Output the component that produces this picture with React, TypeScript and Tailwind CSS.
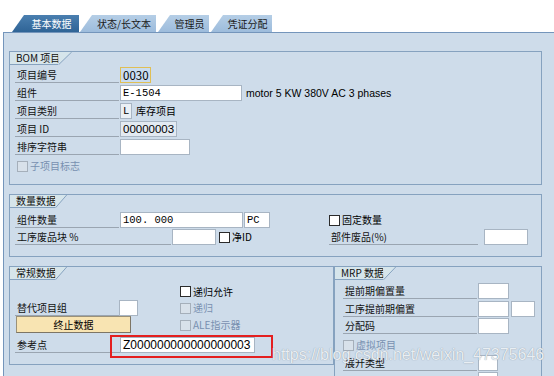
import React from "react";

function Label({ className = "", children }: { className?: string; children?: React.ReactNode }) {
  return (
    <div className={`h-4 shrink-0 border-b border-[#9aa5b1] pl-[2px] text-[10px] leading-[15px] text-[#111] whitespace-nowrap ${className}`}>
      {children}
    </div>
  );
}

function Field({ className = "", children }: { className?: string; children?: React.ReactNode }) {
  return (
    <div className={`h-4 shrink-0 overflow-hidden whitespace-nowrap border border-[#a8b5c3] px-[2px] leading-[14px] text-black ${className}`}>
      {children}
    </div>
  );
}

function Check({ label, disabled = false, className = "" }: { label: string; disabled?: boolean; className?: string }) {
  return (
    <div className={`flex h-4 items-center ${className}`}>
      <div
        className={
          disabled
            ? "h-[11px] w-[11px] border border-[#a5afba] bg-[#d8e1ea]"
            : "h-[11px] w-[11px] border border-[#2b2b2b] bg-white"
        }
      />
      <span className={disabled ? "ml-[2px] text-[10px] leading-[14px] text-[#7890b0]" : "ml-[2px] text-[10px] leading-[14px] text-black"}>
        {label}
      </span>
    </div>
  );
}

function PanelHeader({ title, boxW, slant }: { title: string; boxW: string; slant: number }) {
  return (
    <div className="flex h-[13px]">
      <div className={`${boxW} h-[13px] border-b border-[#86a2bf] bg-[#d6e5eb] pl-[6px] text-[10px] leading-[12px] text-[#111] whitespace-nowrap`}>
        {title}
      </div>
      <svg width={slant} height="13" viewBox={`0 0 ${slant} 13`} className="block">
        <polygon points={`0,0 ${slant},0 0.5,12.5`} fill="#d6e5eb" />
        <line x1={slant - 0.3} y1="0" x2="0.5" y2="12.8" stroke="#86a2bf" strokeWidth="1" />
      </svg>
    </div>
  );
}

function Tab({ label, active, className = "" }: { label: string; active?: boolean; className?: string }) {
  return (
    <div
      className={`h-[17px] shrink-0 [clip-path:polygon(12px_0,100%_0,100%_100%,0_100%)] pl-[12px] text-center text-[10px] leading-[17px] whitespace-nowrap ${
        active ? "bg-[linear-gradient(#4a7fb0,#2f6496)] text-white" : "bg-[linear-gradient(#b5cee6,#9dbcdc)] text-[#1a1a1a]"
      } ${className}`}
    >
      {label}
    </div>
  );
}

export default function App() {
  return (
    <div className="relative h-[376px] w-[554px] overflow-hidden bg-white font-['Noto_Sans_CJK_SC','Noto_Sans',sans-serif]">
      {/* tabs */}
      <div className="flex gap-px pl-[12px] pt-[15px]">
        <Tab label="基本数据" active className="w-[67px]" />
        <Tab label="状态/长文本" className="w-[76px]" />
        <Tab label="管理员" className="w-[51px] ml-px" />
        <Tab label="凭证分配" className="w-[61px] ml-px" />
      </div>

      {/* content */}
      <div className="ml-[3px] h-[400px] border-l border-t border-[#7495bb] bg-[#cedcea] pl-[5px] pt-[18px]">
        {/* BOM 项目 */}
        <div className="h-[134px] w-[533px] border border-[#86a2bf] bg-[#cedcea]">
          <PanelHeader title="BOM 项目" boxW="w-[48px]" slant={14} />
          <div className="pl-[5px] pt-[2px]">
            <div className="flex h-[18px]">
              <Label className="w-[104px]">项目编号</Label>
              <Field className="ml-px w-[31px] border-[#e0bf55] bg-[#c9dcf0] text-[11.5px]">0030</Field>
            </div>
            <div className="flex h-[18px]">
              <Label className="w-[104px]">组件</Label>
              <Field className="ml-px w-[122px] bg-white font-['Liberation_Mono',monospace] text-[10.5px]">E-1504</Field>
              <span className="ml-[4px] font-['Liberation_Sans',sans-serif] text-[10.5px] leading-[16px] text-black whitespace-nowrap">
                motor 5 KW 380V AC 3 phases
              </span>
            </div>
            <div className="flex h-[18px]">
              <Label className="w-[104px]">项目类别</Label>
              <Field className="ml-px w-[12px] bg-[#eaf0f5] px-[1px] font-['Liberation_Mono',monospace] text-[10.5px]">L</Field>
              <span className="ml-[4px] text-[10px] leading-[16px] text-black">库存项目</span>
            </div>
            <div className="flex h-[18px]">
              <Label className="w-[104px]">项目 ID</Label>
              <Field className="ml-px w-[57px] bg-[#e3eaf2] font-['Liberation_Sans',sans-serif] text-[11.5px]">00000003</Field>
            </div>
            <div className="flex h-[18px]">
              <Label className="w-[104px]">排序字符串</Label>
              <Field className="ml-px w-[70px] bg-white" />
            </div>
            <div className="flex h-[18px] items-center pl-[2px]">
              <Check label="子项目标志" disabled />
            </div>
          </div>
        </div>

        {/* 数量数据 */}
        <div className="mt-[9px] h-[63px] w-[533px] border border-[#86a2bf]">
          <PanelHeader title="数量数据" boxW="w-[45px]" slant={12} />
          <div className="pl-[5px] pt-[4px]">
            <div className="flex h-[17px]">
              <div className="flex w-[314px] shrink-0">
                <Label className="w-[104px]">组件数量</Label>
                <Field className="ml-px w-[123px] bg-white font-['Liberation_Mono',monospace] text-[10.5px]">100. 000</Field>
                <Field className="ml-px w-[26px] bg-white px-[1px] font-['Liberation_Mono',monospace] text-[10.5px]">PC</Field>
              </div>
              <Check label="固定数量" />
            </div>
            <div className="flex h-[17px]">
              <div className="flex w-[314px] shrink-0">
                <Label className="w-[156px]">工序废品块 %</Label>
                <Field className="ml-px w-[44px] bg-white" />
                <Check label="净ID" className="ml-[3px]" />
              </div>
              <Label className="w-[149px] pl-0">部件废品(%)</Label>
              <Field className="ml-[6px] w-[44px] bg-white" />
            </div>
          </div>
        </div>

        {/* bottom two panels */}
        <div className="mt-[9px] flex">
          <div className="h-[99px] w-[325px] shrink-0 border border-[#86a2bf]">
            <PanelHeader title="常规数据" boxW="w-[45px]" slant={12} />
            <div className="pl-[5px] pt-[3px]">
              <div className="flex h-[17px] items-center">
                <div className="w-[165px] shrink-0" />
                <Check label="递归允许" />
              </div>
              <div className="flex h-[16px]">
                <div className="flex w-[165px] shrink-0 items-end">
                  <Label className="w-[104px]">替代项目组</Label>
                  <Field className="w-[19px] bg-white" />
                </div>
                <Check label="递归" disabled />
              </div>
              <div className="flex h-[17px]">
                <div className="w-[165px] shrink-0 pl-px">
                  <div className="h-[17px] w-[115px] border border-[#9b9178] border-b-[#7d7565] border-r-[#7d7565] bg-[#f8e4b2] text-center text-[10px] leading-[15px] text-black">
                    终止数据
                  </div>
                </div>
                <Check label="ALE指示器" disabled className="mt-px" />
              </div>
              <div className="mt-[4px] flex h-[16px]">
                <Label className="w-[105px]">参考点</Label>
                <Field className="w-[135px] bg-white px-[1px] font-['Liberation_Sans',sans-serif] text-[12px]">Z000000000000000003</Field>
              </div>
            </div>
          </div>

          <div className="h-[130px] w-[208px] shrink-0 border border-[#86a2bf]">
            <PanelHeader title="MRP 数据" boxW="w-[48px]" slant={13} />
            <div className="pl-[8px] pt-[3px]">
              <div className="flex h-[18px]">
                <Label className="w-[134px]">提前期偏置量</Label>
                <Field className="ml-px w-[31px] bg-white" />
              </div>
              <div className="flex h-[17px]">
                <Label className="w-[134px]">工序提前期偏置</Label>
                <Field className="ml-px w-[31px] bg-white" />
                <Field className="ml-[2px] w-[24px] bg-white" />
              </div>
              <div className="flex h-[19px]">
                <Label className="w-[134px]">分配码</Label>
                <Field className="ml-px w-[31px] bg-white" />
              </div>
              <div className="flex h-[18px] items-start">
                <Check label="虚拟项目" disabled />
              </div>
              <div className="flex h-[17px]">
                <Label className="w-[134px]">展开类型</Label>
                <Field className="ml-px w-[20px] bg-white" />
              </div>
              <div className="flex h-[17px]">
                <div className="w-[135px]" />
                <Field className="w-[20px] bg-white" />
              </div>
            </div>
          </div>
        </div>
      </div>

      {/* annotation overlay */}
      <div className="absolute left-[110px] top-[335px] h-[23px] w-[163px] border-2 border-[#e41f1f]" />
      <div className="absolute left-[272px] top-[346px] font-['Liberation_Sans',sans-serif] text-[16px] leading-[18px] text-[#e9eef3] [text-shadow:0_0_1px_#7d8a98] whitespace-nowrap">
        https://blog.csdn.net/weixin_47375646
      </div>
    </div>
  );
}
